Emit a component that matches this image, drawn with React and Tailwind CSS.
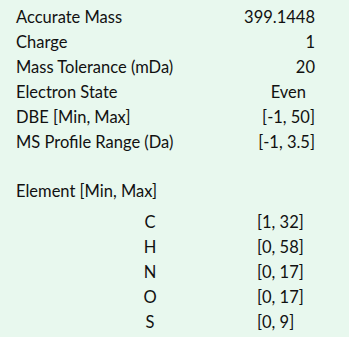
import React from 'react';

const params = [
  { label: 'Accurate Mass', value: '399.1448' },
  { label: 'Charge', value: '1' },
  { label: 'Mass Tolerance (mDa)', value: '20' },
  { label: 'Electron State', value: 'Even', inset: true },
  { label: 'DBE [Min, Max]', value: '[-1, 50]' },
  { label: 'MS Profile Range (Da)', value: '[-1, 3.5]' },
];

const elements = [
  { sym: 'C', range: '[1, 32]' },
  { sym: 'H', range: '[0, 58]' },
  { sym: 'N', range: '[0, 17]' },
  { sym: 'O', range: '[0, 17]' },
  { sym: 'S', range: '[0, 9]' },
];

export default function App() {
  return (
    <div
      className="w-[349px] h-[337px] bg-[#e8f8ee] text-[#111] text-[16.5px] pl-4 pr-[34px] pt-[5px] overflow-hidden"
      style={{ fontFamily: 'Lato, "Open Sans", sans-serif' }}
    >
      {params.map((p) => (
        <div key={p.label} className="flex items-center justify-between h-[25px]">
          <span>{p.label}</span>
          <span className={p.inset ? 'mr-[9px]' : ''}>{p.value}</span>
        </div>
      ))}

      <div className="flex items-center h-[25px] mt-[24px]">Element [Min, Max]</div>

      <div className="mt-[6px]">
        {elements.map((e) => (
          <div key={e.sym} className="flex items-center h-[25px]">
            <span className="w-[20px] ml-[124px] text-center">{e.sym}</span>
            <span className="ml-[97px]">{e.range}</span>
          </div>
        ))}
      </div>
    </div>
  );
}
